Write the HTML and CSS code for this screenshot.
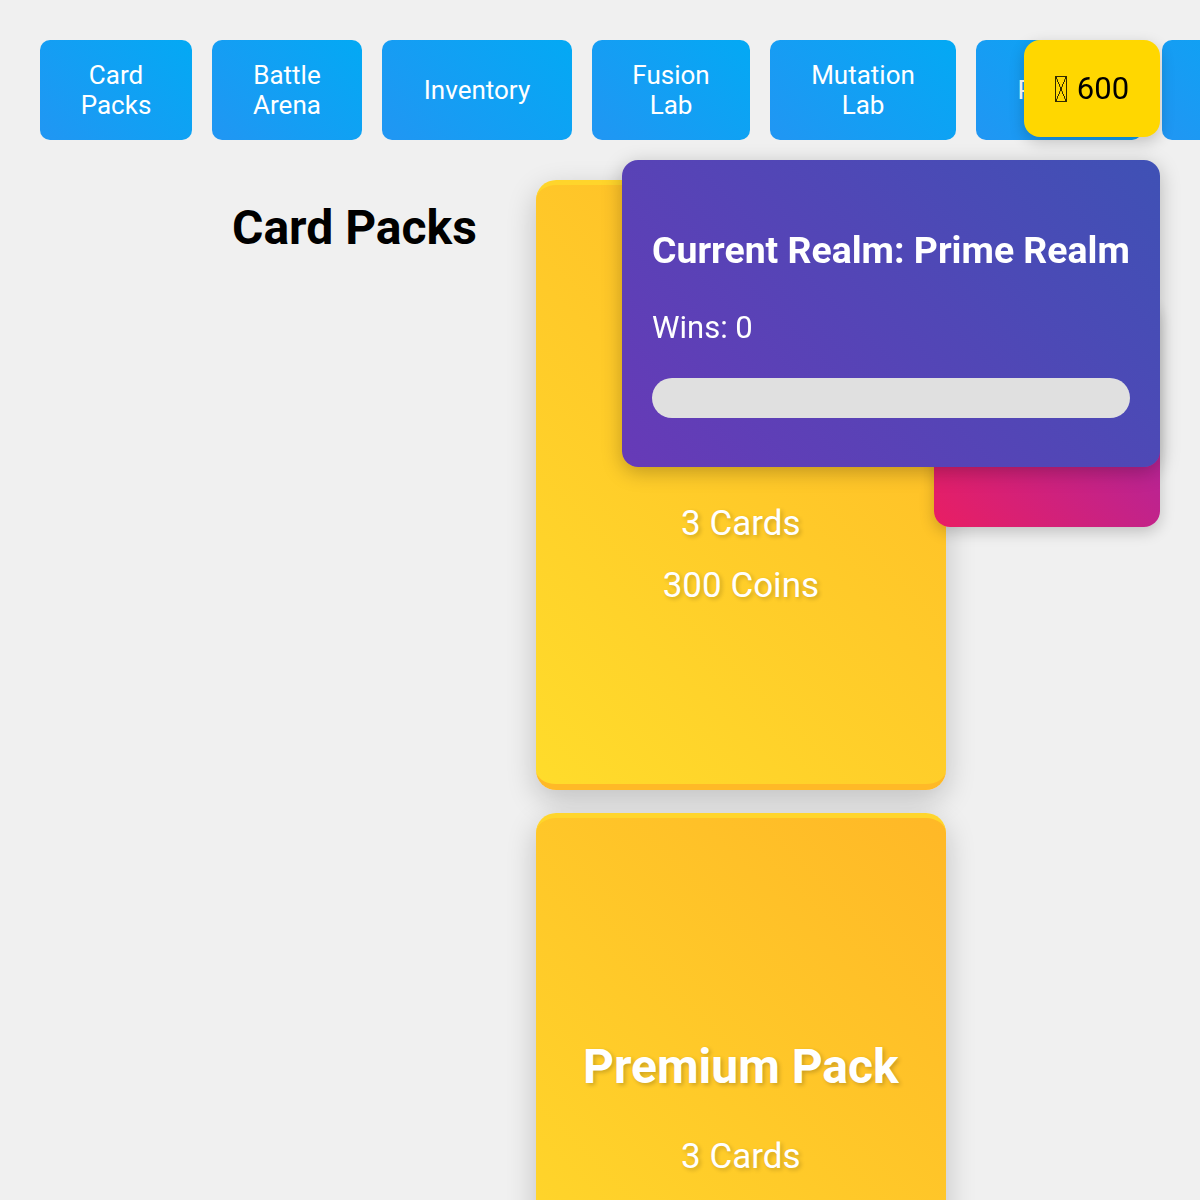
FILE: index.html
```html
<!DOCTYPE html>
<html lang="en">
<head>
<meta charset="utf-8">
<title>Card Packs</title>
<link rel="stylesheet" href="styles.css">
</head>
<body>
<nav class="nav">
  <button class="nav-btn w-packs">Card Packs</button>
  <button class="nav-btn w-arena">Battle Arena</button>
  <button class="nav-btn w-inv">Inventory</button>
  <button class="nav-btn w-fusion">Fusion Lab</button>
  <button class="nav-btn w-mut">Mutation Lab</button>
  <button class="nav-btn w-portal">Portals</button>
  <button class="nav-btn w-more">Realms</button>
</nav>

<main class="content">
  <h2 class="page-title">Card Packs</h2>
  <div class="packs">
    <div class="pack">
      <h3 class="pack-name">Basic Pack</h3>
      <p class="pack-count">3 Cards</p>
      <p class="pack-price">300 Coins</p>
    </div>
    <div class="pack">
      <h3 class="pack-name">Premium Pack</h3>
      <p class="pack-count">3 Cards</p>
      <p class="pack-price">600 Coins</p>
    </div>
  </div>
</main>

<div class="coins"><span class="tofu" aria-hidden="true"></span><span class="coin-amount">600</span></div>
<div class="notice"></div>
<div class="realm">
  <h3 class="realm-title">Current Realm: Prime Realm</h3>
  <p class="realm-wins">Wins: 0</p>
  <div class="realm-bar"></div>
</div>
</body>
</html>
```

FILE: styles.css
```css
html, body {
  margin: 0;
  padding: 0;
  background: #f0f0f0;
  font-family: Roboto, "Noto Sans", sans-serif;
  overflow: hidden;
  height: 1200px;
}

.nav {
  display: flex;
  gap: 20px;
  padding: 40px 0 0 40px;
  overflow: hidden;
}

.nav-btn {
  flex: 0 0 auto;
  height: 100px;
  border: none;
  border-radius: 10px;
  background: linear-gradient(45deg, #2196f3, #03a9f4);
  color: #fff;
  font-family: Roboto, sans-serif;
  font-size: 26px;
  line-height: 30px;
  padding: 0 20px;
  text-align: center;
}

.w-packs { width: 152px; }
.w-arena { width: 150px; }
.w-inv { width: 190px; }
.w-fusion { width: 158px; }
.w-mut { width: 186px; }
.w-portal { width: 166px; }
.w-more { width: 160px; }

.content {
  display: flex;
  align-items: flex-start;
  padding: 40px 0 0 232px;
}

.page-title {
  margin: 20px 59px 0 0;
  font-size: 48px;
  font-weight: 700;
  line-height: 56px;
  color: #000;
}

.packs {
  display: flex;
  flex-direction: column;
  gap: 23px;
  width: 410px;
}

.pack {
  height: 610px;
  flex: 0 0 auto;
  box-sizing: border-box;
  border-radius: 20px;
  border-top: 5px solid #ffd52b;
  border-bottom: 6px solid #ffb927;
  background: linear-gradient(45deg, #ffdc2b, #ffb827);
  box-shadow: 0 10px 30px rgba(0, 0, 0, 0.2);
  color: #fff;
  text-align: center;
  padding-top: 221px;
  text-shadow: 2px 2px 4px rgba(0, 0, 0, 0.2);
}

.pack-name {
  margin: 0;
  font-size: 48px;
  font-weight: 700;
  line-height: 56px;
}

.pack-count {
  margin: 41px 0 0;
  font-size: 35px;
  line-height: 41px;
}

.pack-price {
  margin: 21px 0 0;
  font-size: 35px;
  line-height: 41px;
}

.coins {
  position: fixed;
  top: 40px;
  right: 40px;
  width: 136px;
  height: 97px;
  box-sizing: border-box;
  border-radius: 16px;
  background: #ffd700;
  color: #000;
  font-size: 31px;
  display: flex;
  align-items: center;
  justify-content: center;
  gap: 10px;
  box-shadow: 0 5px 15px rgba(0, 0, 0, 0.2);
  z-index: 3;
}

.tofu {
  display: inline-block;
  width: 10px;
  height: 24px;
  border: 1px solid #000;
  background:
    linear-gradient(to bottom right, transparent 47%, #000 48%, #000 52%, transparent 53%),
    linear-gradient(to bottom left, transparent 47%, #000 48%, #000 52%, transparent 53%);
  opacity: 0.8;
}

.coin-amount {
  line-height: 36px;
}

.notice {
  position: fixed;
  top: 300px;
  left: 934px;
  width: 226px;
  height: 227px;
  border-radius: 16px;
  background: linear-gradient(45deg, #e91e63, #9c27b0);
  box-shadow: 0 5px 15px rgba(0, 0, 0, 0.2);
  z-index: 1;
}

.realm {
  position: fixed;
  top: 160px;
  left: 622px;
  width: 538px;
  height: 307px;
  box-sizing: border-box;
  padding: 30px;
  border-radius: 16px;
  background: linear-gradient(45deg, #673ab7, #3f51b5);
  color: #fff;
  box-shadow: 0 5px 20px rgba(0, 0, 0, 0.25);
  z-index: 2;
}

.realm-title {
  margin: 38px 0 0;
  font-size: 37.4px;
  font-weight: 700;
  line-height: 44px;
  white-space: nowrap;
}

.realm-wins {
  margin: 38px 0 0;
  font-size: 31px;
  line-height: 36px;
}

.realm-bar {
  margin-top: 32px;
  height: 40px;
  border-radius: 20px;
  background: #e0e0e0;
}
```
